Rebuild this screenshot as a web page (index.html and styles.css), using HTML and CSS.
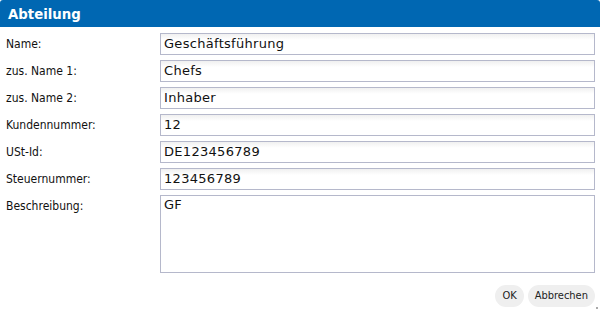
FILE: index.html
```html
<!DOCTYPE html>
<html lang="de">
<head>
<meta charset="utf-8">
<link rel="stylesheet" href="styles.css">
</head>
<body>
<div class="dialog">
  <div class="titlebar">Abteilung</div>
  <form class="form">
    <label class="lbl">Name:</label>
    <div class="field">Geschäftsführung</div>
    <label class="lbl">zus. Name 1:</label>
    <div class="field">Chefs</div>
    <label class="lbl">zus. Name 2:</label>
    <div class="field">Inhaber</div>
    <label class="lbl">Kundennummer:</label>
    <div class="field">12</div>
    <label class="lbl">USt-Id:</label>
    <div class="field">DE123456789</div>
    <label class="lbl">Steuernummer:</label>
    <div class="field">123456789</div>
    <label class="lbl">Beschreibung:</label>
    <div class="field area">GF</div>
  </form>
  <div class="buttons">
    <span class="btn">OK</span>
    <span class="btn">Abbrechen</span>
  </div>
  <span class="grip"></span>
</div>
</body>
</html>
```
FILE: styles.css
```css
html, body {
  margin: 0;
  padding: 0;
  background: #fff;
}
.dialog {
  position: relative;
  width: 600px;
  height: 312px;
  box-sizing: border-box;
  font-family: "DejaVu Sans Condensed", "DejaVu Sans", sans-serif;
  font-size: 12px;
  color: #111;
  display: flex;
  flex-direction: column;
}
.titlebar {
  height: 27px;
  background: #0067b2;
  color: #fff;
  font-family: "DejaVu Sans", sans-serif;
  font-weight: bold;
  font-size: 13.3px;
  line-height: 29px;
  padding-left: 8px;
  border-radius: 3px 3px 0 0;
  box-sizing: border-box;
}
.form {
  margin: 6px 5px 0 6px;
  display: grid;
  grid-template-columns: 154px 1fr;
  row-gap: 5px;
}
.lbl {
  line-height: 20px;
  padding-top: 1px;
}
.field {
  height: 22px;
  box-sizing: border-box;
  border: 1px solid #b5b8cb;
  background: linear-gradient(#f0f0f0, #ffffff 6px);
  padding: 0 3px;
  font-family: "DejaVu Sans", sans-serif;
  font-size: 13px;
  letter-spacing: 0.3px;
  line-height: 20px;
}
.area {
  height: 78px;
  background: #fff;
  line-height: 18px;
}
.buttons {
  display: flex;
  justify-content: flex-end;
  gap: 4px;
  margin: 12px 5px 0 0;
}
.btn {
  height: 22px;
  line-height: 22px;
  padding: 0 7px;
  border-radius: 11px;
  background: #efefef;
  color: #222;
  font-size: 11px;
}
.grip {
  position: absolute;
  right: 2px;
  bottom: 3px;
  width: 2px;
  height: 2px;
  background: #aaa;
}
```
